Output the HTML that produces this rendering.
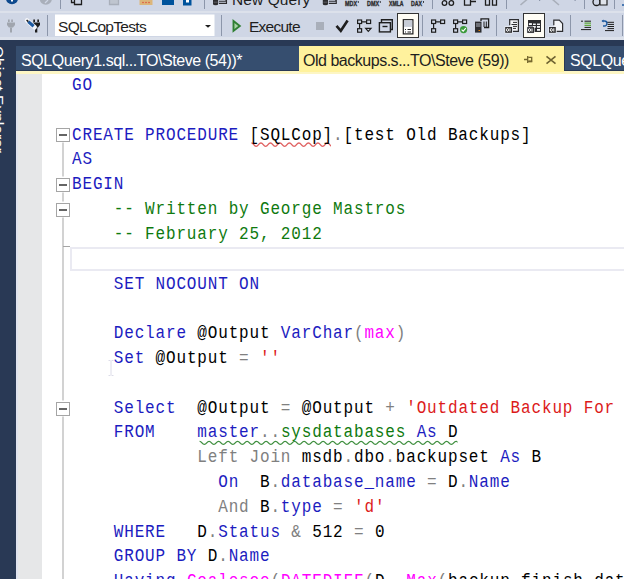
<!DOCTYPE html>
<html><head><meta charset="utf-8">
<style>
*{margin:0;padding:0;box-sizing:border-box}
html,body{width:624px;height:579px;overflow:hidden;background:#fff;font-family:"Liberation Sans",sans-serif}
.a{position:absolute}
#tb{left:0;top:0;width:624px;height:40px;background:#cfd6e5}
#tbrow1{left:0;top:0;width:624px;height:11px;background:#cfd6e5;border-bottom:1px solid #dde2ec}
.sep{position:absolute;width:1px;background:#a4adc0}
#strip{left:0;top:40px;width:624px;height:539px;background:#293955}
#side{left:0;top:40px;width:16px;height:539px;background:#293955}
.tab{position:absolute;top:46px;height:24px}
.tt{position:absolute;z-index:2;top:49px;height:24px;font-size:16px;line-height:24px;white-space:pre}
#t1{left:16px;width:283px;background:#364e6f}
#t2{left:299px;width:265px;height:26px;background:#fff29d;z-index:1}
#t3{left:565px;width:70px;background:#364e6f}
#ybar{left:16px;top:71px;width:608px;height:3px;background:#fdf6c4}
#margin{left:16px;top:74px;width:26px;height:505px;background:#e6e7e8}
#marginl{left:16px;top:74px;width:2px;height:505px;background:#dfe3ee}
#ed{left:42px;top:74px;width:582px;height:505px;background:#fff}
#code{left:72px;top:74.2px;font-family:"Liberation Mono",monospace;font-size:16px;letter-spacing:0.84px;line-height:21.828px;white-space:pre;color:#000;transform-origin:0 0;transform:scaleY(1.138)}
.k{color:#1c1cc0}.c{color:#0f7a0f}.s{color:#dc1a1a}.g{color:#808080}.f{color:#ff00ff}.sy{color:#0f7a0f}
.ln{height:21.828px}
</style></head><body>
<svg class="a" style="left:0;top:0" width="624" height="40" viewBox="0 0 624 40">
<rect x="0" y="0" width="624" height="40" fill="#cfd6e5"/>
<rect x="0" y="11" width="624" height="2" fill="#dce1eb"/>
<rect x="0" y="37" width="624" height="3" fill="#dce1eb"/>
<!-- row1 -->
<circle cx="12" cy="-2" r="6.2" fill="#0e4a8e"/>
<rect x="11" y="0" width="2" height="1.5" fill="#fff"/>
<circle cx="45.8" cy="-1.5" r="6.2" fill="#a9afba"/>
<path d="M45 3 L48 0" stroke="#cfd6e5" stroke-width="1.2"/>
<rect x="60" y="0" width="1" height="9" fill="#8c96aa"/>
<path d="M71.5 0 V2.5 H74.5 M74.5 0 V4.5 H81.5 V0" fill="none" stroke="#1e1e1e" stroke-width="1.3"/>
<path d="M109.5 0 V4.5 H118.5 V0" fill="#bfc5cf" stroke="#a9afba" stroke-width="1.3"/>
<path d="M139.5 0 V5 H152.5 V0 Z" fill="#dcb67a"/>
<circle cx="143" cy="2.5" r="0.8" fill="#e0523f"/><circle cx="146" cy="2.5" r="0.8" fill="#e0523f"/><circle cx="149" cy="2.5" r="0.8" fill="#e0523f"/>
<rect x="162" y="0" width="12" height="5" fill="#00539c"/>
<rect x="183" y="0" width="8.5" height="5.5" fill="#00539c"/>
<rect x="186" y="0" width="3" height="2.5" fill="#fff"/>
<rect x="204" y="0" width="1" height="9" fill="#8c96aa"/>
<path d="M213 0 V4 A2.6 1.3 0 0 0 218.2 4 V0 Z" fill="#2d2d30"/><path d="M213.6 2.2 H217.6" stroke="#6a6a70" stroke-width="0.8"/><path d="M219 1.3 H226 V-1 M219 3.4 H226.5 V0" fill="none" stroke="#2d2d30" stroke-width="1.1"/>
<path d="M322.8 0 V4 A2.6 1.3 0 0 0 328.0 4 V0 Z" fill="#2d2d30"/><path d="M323.40000000000003 2.2 H327.40000000000003" stroke="#6a6a70" stroke-width="0.8"/><path d="M328.8 1.3 H335.8 V-1 M328.8 3.4 H336.3 V0" fill="none" stroke="#2d2d30" stroke-width="1.1"/>
<g font-family="Liberation Sans" font-weight="bold" font-size="6.6" fill="#2d2d30" stroke="#2d2d30" stroke-width="0.35">
<text x="345" y="6" textLength="12" lengthAdjust="spacingAndGlyphs">MDX</text>
<text x="367" y="6" textLength="12" lengthAdjust="spacingAndGlyphs">DMX</text>
<text x="389" y="6" textLength="14.5" lengthAdjust="spacingAndGlyphs">XMLA</text>
<text x="411" y="6" textLength="11" lengthAdjust="spacingAndGlyphs">DAX</text>
</g>
<path d="M358.3 1 V3 M380.3 1 V3 M423.5 1 V2.5 L422.8 3.2" stroke="#2d2d30" stroke-width="0.9"/>
<rect x="432" y="0" width="1" height="9" fill="#8c96aa"/>
<circle cx="444.5" cy="3" r="2.3" fill="none" stroke="#1e1e1e" stroke-width="1.3"/>
<circle cx="451.3" cy="3" r="2.3" fill="none" stroke="#1e1e1e" stroke-width="1.3"/>
<path d="M464.5 0 V5.2 H470.5 V0 M470.5 1.5 H476" fill="none" stroke="#1e1e1e" stroke-width="1.3"/>
<path d="M485.5 0 V5.2 H489.5 V0 M492.5 0 V5.2 H496.5 V0" fill="none" stroke="#1e1e1e" stroke-width="1.3"/>
<rect x="506" y="0" width="1" height="9" fill="#8c96aa"/>
<path d="M520.5 5 L527 -0.5 M552.5 -0.5 L559 5" stroke="#a9afba" stroke-width="1.6"/>
<rect x="539" y="0" width="1.2" height="1" fill="#8c96aa"/><rect x="574.5" y="0" width="1.2" height="1" fill="#8c96aa"/>
<rect x="584" y="0" width="1" height="9" fill="#8c96aa"/>
<circle cx="596.5" cy="2" r="3.5" fill="none" stroke="#1e1e1e" stroke-width="1.3"/>
<path d="M600 0 V5 H607 V0" fill="#dfe3ea" stroke="#1e1e1e" stroke-width="1.2"/>
<rect x="614" y="0" width="1" height="9" fill="#8c96aa"/>
<circle cx="623" cy="5" r="1" fill="#1e5aa0"/>
<!-- row2 -->
<g fill="#a0a5ae">
<rect x="8" y="19.5" width="1.7" height="2.5"/><rect x="11.2" y="19.5" width="1.7" height="2.5"/>
<path d="M7 22.5 H15 V25 L13 27.5 H8.9 L7 25 Z"/><rect x="10" y="27.5" width="2" height="5"/>
</g>
<g fill="#1e1e1e">
<rect x="33.3" y="19.5" width="1.7" height="2.5"/><rect x="37.3" y="19.5" width="1.7" height="2.5"/>
<path d="M32.5 22.5 H40 V25 L38 27.5 H34.5 L32.5 25 Z"/><rect x="35" y="27.5" width="2.3" height="5"/>
</g>
<path d="M27 20.5 L34.6 27.2" stroke="#f4f6fa" stroke-width="4.6" stroke-linecap="round"/>
<path d="M28.3 21.6 L33.6 26.3" stroke="#1e5aa0" stroke-width="3.2" stroke-linecap="butt"/>
<path d="M26.6 20 L28.3 21.6" stroke="#1e1e1e" stroke-width="1.6"/>
<rect x="47" y="15" width="1" height="21" fill="#8c96aa"/>
<rect x="55" y="14.5" width="159.5" height="21.5" fill="#fff"/>
<path d="M205 25 H211 L208 27.8 Z" fill="#1e1e1e"/>
<rect x="221" y="15" width="1" height="21" fill="#8c96aa"/>
<path d="M233.5 21 L239.8 25.9 L233.5 30.9 Z" fill="#a9d2a6" stroke="#2f7f33" stroke-width="1.9" stroke-linejoin="miter"/>
<rect x="316" y="22" width="8" height="8" fill="#a9afba"/>
<path d="M336.5 25.8 L340.8 30.8 L347.6 20.5" fill="none" stroke="#1e1e1e" stroke-width="2.6"/>
<g fill="none" stroke="#1e1e1e" stroke-width="1.2">
<rect x="357.6" y="20" width="4" height="3.5"/><rect x="366.6" y="20" width="4" height="3.5"/><rect x="357.6" y="28.7" width="4" height="3.5"/>
<path d="M362 21.8 H366 M359.6 23.5 V28.5 M365.7 28.3 H371 L368.3 31.3 Z"/>
</g>
<g fill="none" stroke="#1e1e1e" stroke-width="1.4">
<path d="M381.5 22 V19.8 H392.3 V29.5 H390.5"/>
<rect x="379.4" y="22.7" width="11" height="9.2"/>
<path d="M382.5 26.5 H387.5"/>
</g>
<rect x="397.5" y="13.5" width="21" height="24" fill="#fffdf5" stroke="#333" stroke-width="1"/>
<rect x="403.3" y="19.7" width="9.6" height="14.2" fill="#fff" stroke="#1e1e1e" stroke-width="1.2"/>
<rect x="404" y="20.4" width="8.2" height="6.5" fill="#c7ccd6"/>
<path d="M405 29.5 H406 M407.5 29.5 H411 M405 32 H406 M407.5 32 H411" stroke="#1e1e1e" stroke-width="1"/>
<rect x="422" y="15" width="1" height="21" fill="#8c96aa"/>
<g fill="none" stroke="#1e1e1e" stroke-width="1.2">
<rect x="431.6" y="20" width="4" height="3.5"/><rect x="440.6" y="20" width="4" height="3.5"/><rect x="431.6" y="28.7" width="4" height="3.5"/>
<path d="M436 21.8 H440 M433.6 23.5 V28.5"/>
<rect x="453.6" y="20" width="4" height="3.5"/><rect x="462.6" y="20" width="4" height="3.5"/><rect x="453.6" y="28.7" width="4" height="3.5"/>
<path d="M458 21.8 H462 M455.6 23.5 V28.5"/>
</g>
<circle cx="463.6" cy="29.6" r="3.6" fill="#3b9a3b"/>
<path d="M461.6 29.6 L463.2 31.2 L465.8 28.2" fill="none" stroke="#fff" stroke-width="1.1"/>
<path d="M481 21 V18.8 H488.6 V27.5 H484" fill="none" stroke="#1e1e1e" stroke-width="1.3"/>
<path d="M484 21.5 V27 M486.3 21.5 V27" stroke="#1e1e1e" stroke-width="1"/>
<rect x="475" y="21.6" width="6.5" height="11" fill="#2d2d30"/>
<path d="M476 24 H480.5 M476 26 H480.5" stroke="#cfd6e5" stroke-width="0.8"/>
<rect x="478.5" y="30" width="1.5" height="1" fill="#e07a00"/>
<rect x="496" y="15" width="1" height="21" fill="#8c96aa"/>
<path d="M509.7 25.3 V19.7 H518.4 V31.4 H512.8 V26.5 H509.7 Z" fill="#f4f5f8" stroke="none"/>
<path d="M509.7 25.3 V19.7 H518.4 V31.4 H512.8" fill="none" stroke="#2d2d30" stroke-width="1.2"/>
<path d="M513 22.4 H517 M511.5 24.5 H517 M513 26.4 H517 M513 28.4 H516" stroke="#2d2d30" stroke-width="1"/>
<rect x="504.59999999999997" y="26.4" width="8" height="7" fill="#eef0f5"/><rect x="505.2" y="27.0" width="6.8" height="5.8" fill="#2d2d30"/><ellipse cx="507.5" cy="29.9" rx="1" ry="1.5" fill="none" stroke="#fff" stroke-width="1"/><rect x="509.5" y="28.3" width="1" height="3.2" fill="#fff"/>
<rect x="523.5" y="13.5" width="21" height="24" fill="#fffdf5" stroke="#333" stroke-width="1"/>
<rect x="528" y="20" width="13" height="12" fill="#2d2d30"/>
<g fill="#f4f5f8"><rect x="528.9" y="23.1" width="3" height="1.9"/><rect x="533" y="23.1" width="2.8" height="1.9"/><rect x="537" y="23.1" width="3" height="1.9"/>
<rect x="533" y="26" width="2.8" height="1.8"/><rect x="537" y="26" width="3" height="1.8"/><rect x="537" y="29" width="3" height="1.8"/></g>
<path d="M532.3 23.5 H540 M536.4 26.4 V30.8" stroke="#2d2d30" stroke-width="0.5"/>
<rect x="526.6" y="26.5" width="8" height="7" fill="#eef0f5"/><rect x="527.2" y="27.1" width="6.8" height="5.8" fill="#2d2d30"/><ellipse cx="529.5" cy="30.0" rx="1" ry="1.5" fill="none" stroke="#fff" stroke-width="1"/><rect x="531.5" y="28.400000000000002" width="1" height="3.2" fill="#fff"/>
<path d="M553.8 25.3 V20.2 H559.3 L562.6 23.5 V31.4 H556.5" fill="#f4f5f8" stroke="none"/>
<path d="M553.8 25.3 V20.2 H559.3 L562.6 23.5 V31.4 H556.5" fill="none" stroke="#2d2d30" stroke-width="1.2"/>
<rect x="548.4" y="26.4" width="8" height="7" fill="#eef0f5"/><rect x="549.0" y="27.0" width="6.8" height="5.8" fill="#2d2d30"/><ellipse cx="551.3" cy="29.9" rx="1" ry="1.5" fill="none" stroke="#fff" stroke-width="1"/><rect x="553.3" y="28.3" width="1" height="3.2" fill="#fff"/>
<rect x="570" y="15" width="1" height="21" fill="#8c96aa"/>
<path d="M581 21.2 H583 M584.5 21.2 H591 M584.5 27.4 H591 M581 29.6 H591" stroke="#1e1e1e" stroke-width="1"/>
<path d="M584.5 23.2 H591 M584.5 25.3 H591" stroke="#5fa83a" stroke-width="1.2"/>
<path d="M606.5 22.3 H614 M607.5 24.4 H614 M607.5 26.5 H614 M607.5 28.6 H614 M605 30.6 H614" stroke="#1e1e1e" stroke-width="1"/>
<path d="M602.5 21 H604.6 A2.3 2.5 0 0 1 604.6 26 H603" fill="none" stroke="#1e5aa0" stroke-width="1.4"/>
<path d="M601.5 21 L603.5 19.5 V22.5 Z" fill="#1e5aa0"/>
<rect x="622" y="15" width="1" height="21" fill="#8c96aa"/>
</svg>
<div class="a" style="left:58px;top:16px;height:21px;line-height:21px;font-size:15.5px;letter-spacing:-0.7px;color:#1e1e1e;white-space:pre">SQLCopTests</div>
<div class="a" style="left:249px;top:16px;height:21px;line-height:21px;font-size:15.5px;letter-spacing:-0.75px;color:#1e1e1e;white-space:pre">Execute</div>
<div class="a" style="left:232px;top:-11.5px;height:21px;line-height:21px;font-size:15.5px;letter-spacing:0.1px;color:#1e1e1e;white-space:pre">New Query</div>

<div id="strip" class="a"></div>
<div id="side" class="a"></div>
<div class="tab" id="t1"></div><div class="tt" style="left:21px;color:#fff;letter-spacing:-0.43px">SQLQuery1.sql...TO\Steve (54))*</div>
<div class="tab" id="t2"></div><div class="tt" style="left:303px;color:#1e1e1e;letter-spacing:-0.48px">Old backups.s...TO\Steve (59))</div>
<svg class="a" style="left:520px;top:52px;z-index:2" width="40" height="16" viewBox="520 52 40 16"><path d="M524 59.5 H527.5 M527.7 56 V63 M528.5 57.3 H531.7 V61.5 H528.5" fill="none" stroke="#75672e" stroke-width="1.3"/><rect x="528.3" y="60.5" width="3.8" height="1.6" fill="#75672e"/><path d="M546.5 56.3 L555.5 63.6 M555.5 56.3 L546.5 63.6" stroke="#6f6331" stroke-width="1.6"/></svg>
<div class="tab" id="t3"></div><div class="tt" style="left:570px;color:#fff;letter-spacing:-0.43px">SQLQue</div>
<div id="ybar" class="a"></div>
<div id="ed" class="a"></div>
<div id="margin" class="a"></div>
<div id="marginl" class="a"></div>
<div class="a" style="left:0;top:40px;width:16px;height:539px;overflow:hidden"><div style="position:absolute;left:-10.5px;top:6px;transform-origin:0 0;transform:rotate(90deg) translate(0,-16px);font-size:15.5px;line-height:16px;color:#fff;white-space:pre">Object Explorer</div></div>
<svg class="a" style="left:42px;top:74px" width="40" height="505" viewBox="42 74 40 505">
<g fill="none" stroke="#a5a5a5" stroke-width="1">
<path d="M63 142.5 V176.5 M63 192.5 V201.5 M63 217.5 V400.5 M63 416.5 V579 M63 246.5 H70"/>
<rect x="56.5" y="128.5" width="13" height="13" fill="#fff"/>
<rect x="56.5" y="178.5" width="13" height="13" fill="#fff"/>
<rect x="56.5" y="203.5" width="13" height="13" fill="#fff"/>
<rect x="56.5" y="402.5" width="13" height="13" fill="#fff"/>
</g>
<path d="M59 135.0 H67 M59 185.0 H67 M59 210.0 H67 M59 409.0 H67 " stroke="#333" stroke-width="1.3"/>
</svg>
<div class="a" style="left:70px;top:246.5px;width:560px;height:24.5px;border:2px solid #eaeaf2;border-right:none"></div>
<svg class="a" style="left:0;top:0" width="624" height="579" viewBox="0 0 624 579" style="pointer-events:none">
<clipPath id="cr"><rect x="250" y="130" width="81" height="30"/></clipPath>
<clipPath id="cg"><rect x="197.5" y="430" width="260" height="30"/></clipPath>
<path d="M251.40 143.00 C253.78 143.00 253.78 146.40 256.15 146.40 C258.52 146.40 258.52 143.00 260.90 143.00 C263.27 143.00 263.27 146.40 265.65 146.40 C268.02 146.40 268.02 143.00 270.40 143.00 C272.77 143.00 272.77 146.40 275.15 146.40 C277.52 146.40 277.52 143.00 279.90 143.00 C282.27 143.00 282.27 146.40 284.65 146.40 C287.02 146.40 287.02 143.00 289.40 143.00 C291.77 143.00 291.77 146.40 294.15 146.40 C296.52 146.40 296.52 143.00 298.90 143.00 C301.27 143.00 301.27 146.40 303.65 146.40 C306.02 146.40 306.02 143.00 308.40 143.00 C310.77 143.00 310.77 146.40 313.15 146.40 C315.52 146.40 315.52 143.00 317.90 143.00 C320.27 143.00 320.27 146.40 322.65 146.40 C325.02 146.40 325.02 143.00 327.40 143.00 C329.77 143.00 329.77 146.40 332.15 146.40 C334.52 146.40 334.52 143.00 336.90 143.00" fill="none" stroke="#e06262" stroke-width="1.3" clip-path="url(#cr)"/>
<path d="M199.60 441.30 C201.97 441.30 201.97 444.40 204.35 444.40 C206.72 444.40 206.72 441.30 209.10 441.30 C211.47 441.30 211.47 444.40 213.85 444.40 C216.22 444.40 216.22 441.30 218.60 441.30 C220.97 441.30 220.97 444.40 223.35 444.40 C225.72 444.40 225.72 441.30 228.10 441.30 C230.47 441.30 230.47 444.40 232.85 444.40 C235.22 444.40 235.22 441.30 237.60 441.30 C239.97 441.30 239.97 444.40 242.35 444.40 C244.72 444.40 244.72 441.30 247.10 441.30 C249.47 441.30 249.47 444.40 251.85 444.40 C254.22 444.40 254.22 441.30 256.60 441.30 C258.98 441.30 258.98 444.40 261.35 444.40 C263.73 444.40 263.73 441.30 266.10 441.30 C268.48 441.30 268.48 444.40 270.85 444.40 C273.23 444.40 273.23 441.30 275.60 441.30 C277.98 441.30 277.98 444.40 280.35 444.40 C282.73 444.40 282.73 441.30 285.10 441.30 C287.48 441.30 287.48 444.40 289.85 444.40 C292.23 444.40 292.23 441.30 294.60 441.30 C296.98 441.30 296.98 444.40 299.35 444.40 C301.73 444.40 301.73 441.30 304.10 441.30 C306.48 441.30 306.48 444.40 308.85 444.40 C311.23 444.40 311.23 441.30 313.60 441.30 C315.98 441.30 315.98 444.40 318.35 444.40 C320.73 444.40 320.73 441.30 323.10 441.30 C325.48 441.30 325.48 444.40 327.85 444.40 C330.23 444.40 330.23 441.30 332.60 441.30 C334.98 441.30 334.98 444.40 337.35 444.40 C339.73 444.40 339.73 441.30 342.10 441.30 C344.48 441.30 344.48 444.40 346.85 444.40 C349.23 444.40 349.23 441.30 351.60 441.30 C353.98 441.30 353.98 444.40 356.35 444.40 C358.73 444.40 358.73 441.30 361.10 441.30 C363.48 441.30 363.48 444.40 365.85 444.40 C368.23 444.40 368.23 441.30 370.60 441.30 C372.98 441.30 372.98 444.40 375.35 444.40 C377.73 444.40 377.73 441.30 380.10 441.30 C382.48 441.30 382.48 444.40 384.85 444.40 C387.23 444.40 387.23 441.30 389.60 441.30 C391.98 441.30 391.98 444.40 394.35 444.40 C396.73 444.40 396.73 441.30 399.10 441.30 C401.48 441.30 401.48 444.40 403.85 444.40 C406.23 444.40 406.23 441.30 408.60 441.30 C410.98 441.30 410.98 444.40 413.35 444.40 C415.73 444.40 415.73 441.30 418.10 441.30 C420.48 441.30 420.48 444.40 422.85 444.40 C425.23 444.40 425.23 441.30 427.60 441.30 C429.98 441.30 429.98 444.40 432.35 444.40 C434.73 444.40 434.73 441.30 437.10 441.30 C439.48 441.30 439.48 444.40 441.85 444.40 C444.23 444.40 444.23 441.30 446.60 441.30 C448.98 441.30 448.98 444.40 451.35 444.40 C453.73 444.40 453.73 441.30 456.10 441.30 C458.48 441.30 458.48 444.40 460.85 444.40 C463.23 444.40 463.23 441.30 465.60 441.30 C467.98 441.30 467.98 444.40 470.35 444.40" fill="none" stroke="#3f8f3f" stroke-width="1.3" clip-path="url(#cg)"/>
</svg>
<svg class="a" style="left:105px;top:356px" width="12" height="24" viewBox="105 356 12 24"><path d="M108.5 360.5 H110.5 M111.5 360.5 H113.5 M111 361 V375 M108.5 375.5 H110.5 M111.5 375.5 H113.5" stroke="#dcdce8" stroke-width="1"/></svg>
<div id="code" class="a"><div class="ln"><span class="k">GO</span></div><div class="ln"> </div><div class="ln"><span class="k">CREATE PROCEDURE</span> [SQLCop]<span class="g">.</span>[test Old Backups]</div><div class="ln"><span class="k">AS</span></div><div class="ln"><span class="k">BEGIN</span></div><div class="ln">    <span class="c">-- Written by George Mastros</span></div><div class="ln">    <span class="c">-- February 25, 2012</span></div><div class="ln"> </div><div class="ln">    <span class="k">SET NOCOUNT ON</span></div><div class="ln"> </div><div class="ln">    <span class="k">Declare</span> @Output <span class="k">VarChar</span><span class="g">(</span><span class="f">max</span><span class="g">)</span></div><div class="ln">    <span class="k">Set</span> @Output <span class="g">=</span> <span class="s">''</span></div><div class="ln"> </div><div class="ln">    <span class="k">Select</span>  @Output <span class="g">=</span> @Output <span class="g">+</span> <span class="s">'Outdated Backup For Database: '</span></div><div class="ln">    <span class="k">FROM</span>    <span class="k">master</span><span class="g">..</span><span class="sy">sysdatabases</span> <span class="k">As</span> D</div><div class="ln">            <span class="g">Left Join</span> msdb<span class="g">.</span>dbo<span class="g">.</span>backupset <span class="k">As</span> B</div><div class="ln">              <span class="k">On</span>  B<span class="g">.</span><span class="k">database_name</span> <span class="g">=</span> D<span class="g">.</span><span class="k">Name</span></div><div class="ln">              <span class="g">And</span> B<span class="g">.</span><span class="k">type</span> <span class="g">=</span> <span class="s">'d'</span></div><div class="ln">    <span class="k">WHERE</span>   D<span class="g">.</span><span class="k">Status</span> <span class="g">&amp;</span> 512 <span class="g">=</span> 0</div><div class="ln">    <span class="k">GROUP BY</span> D<span class="g">.</span><span class="k">Name</span></div><div class="ln">    <span class="k">Having</span> <span class="f">Coalesce</span><span class="g">(</span><span class="f">DATEDIFF</span><span class="g">(</span>D<span class="g">,</span> <span class="f">Max</span><span class="g">(</span>backup_finish_date<span class="g">),</span></div></div>
</body></html>
